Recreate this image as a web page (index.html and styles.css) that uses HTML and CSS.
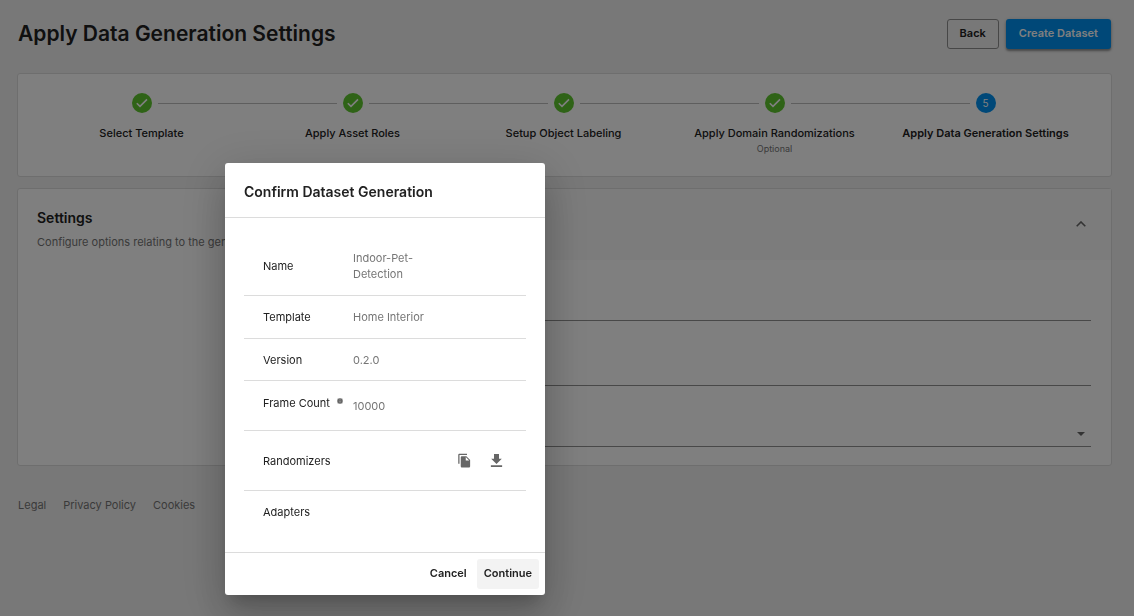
FILE: index.html
```html
<!DOCTYPE html>
<html lang="en">
<head>
<meta charset="utf-8">
<meta name="viewport" content="width=device-width, initial-scale=1">
<title>Apply Data Generation Settings</title>
<link rel="stylesheet" href="styles.css">
</head>
<body>
<div class="page">
  <header class="page-header">
    <h1 class="page-title">Apply Data Generation Settings</h1>
    <div class="page-actions">
      <button type="button" class="button button-outlined">Back</button>
      <button type="button" class="button button-primary">Create Dataset</button>
    </div>
  </header>

  <main class="content">
    <ol class="card stepper">
      <li class="step">
        <svg class="step-icon step-done" viewBox="0 0 20 20" aria-hidden="true"><circle cx="10" cy="10" r="10"/><path d="M4.8 10.2l3.2 3.2 7-7"/></svg>
        <span class="step-label">Select Template</span>
      </li>
      <li class="step">
        <svg class="step-icon step-done" viewBox="0 0 20 20" aria-hidden="true"><circle cx="10" cy="10" r="10"/><path d="M4.8 10.2l3.2 3.2 7-7"/></svg>
        <span class="step-label">Apply Asset Roles</span>
      </li>
      <li class="step">
        <svg class="step-icon step-done" viewBox="0 0 20 20" aria-hidden="true"><circle cx="10" cy="10" r="10"/><path d="M4.8 10.2l3.2 3.2 7-7"/></svg>
        <span class="step-label">Setup Object Labeling</span>
      </li>
      <li class="step">
        <svg class="step-icon step-done" viewBox="0 0 20 20" aria-hidden="true"><circle cx="10" cy="10" r="10"/><path d="M4.8 10.2l3.2 3.2 7-7"/></svg>
        <span class="step-label">Apply Domain Randomizations</span>
        <span class="step-note">Optional</span>
      </li>
      <li class="step" aria-current="step">
        <span class="step-icon step-number">5</span>
        <span class="step-label step-label-active">Apply Data Generation Settings</span>
      </li>
    </ol>

    <section class="card settings">
      <div class="settings-intro">
        <h2 class="settings-title">Settings</h2>
        <p class="settings-text">Configure options relating to the generation</p>
      </div>
      <div class="settings-panel">
        <button type="button" class="panel-toggle" aria-label="Collapse settings" aria-expanded="true">
          <svg class="chevron" viewBox="0 0 10 6" aria-hidden="true"><path d="M.7 5.3L5 1l4.3 4.3"/></svg>
        </button>
        <form class="fields">
          <input class="field" type="text" aria-label="Name">
          <input class="field" type="text" aria-label="Frame Count">
          <div class="select-wrap">
            <select class="field field-select" aria-label="Template"><option></option></select>
            <svg class="caret" viewBox="0 0 8 4" aria-hidden="true"><path d="M0 0h8L4 4z"/></svg>
          </div>
        </form>
      </div>
    </section>
  </main>

  <footer class="footer">
    <a href="#">Legal</a>
    <a href="#">Privacy Policy</a>
    <a href="#">Cookies</a>
  </footer>
</div>

<div class="backdrop">
  <div class="dialog" role="dialog" aria-modal="true" aria-labelledby="dialog-title">
    <h2 class="dialog-title" id="dialog-title">Confirm Dataset Generation</h2>
    <div class="dialog-body">
      <table class="summary">
        <tr><th scope="row">Name</th><td>Indoor-Pet-<br>Detection</td></tr>
        <tr><th scope="row">Template</th><td>Home Interior</td></tr>
        <tr class="row-compact"><th scope="row">Version</th><td>0.2.0</td></tr>
        <tr class="row-frames"><th scope="row">
          <span class="frames-label">Frame Count
            <svg class="info" viewBox="0 0 6 6" aria-hidden="true"><circle cx="3" cy="3" r="3"/><path d="M3 2.7v1.700M3 1.4v.6"/></svg>
          </span></th><td>10000</td></tr>
        <tr class="row-randomizers"><th scope="row">Randomizers</th><td>
          <div class="row-actions">
            <button type="button" class="icon-button" aria-label="Copy randomizers">
              <svg viewBox="0 0 24 24" aria-hidden="true"><path d="M16 1H4c-1.100 0-2 .9-2 2v14h2V3h12V1zm-1 4l6 6v10c0 1.100-.9 2-2 2H7.990C6.890 23 6 22.100 6 21l.010-14c0-1.100.890-2 1.990-2h7zm-1 7h5.500L14 6.500V12z"/></svg>
            </button>
            <button type="button" class="icon-button" aria-label="Download randomizers">
              <svg viewBox="0 0 24 24" aria-hidden="true"><path d="M20.500 9h-4.500V1.500H8V9H3.500l8.500 8.500L20.500 9zM3 19.500V22.500h18v-3H3z"/></svg>
            </button>
          </div></td></tr>
        <tr class="row-compact"><th scope="row">Adapters</th><td></td></tr>
      </table>
    </div>
    <div class="dialog-actions">
      <button type="button" class="text-button">Cancel</button>
      <button type="button" class="text-button text-button-focused">Continue</button>
    </div>
  </div>
</div>
</body>
</html>
```
FILE: styles.css
```css
* {
  box-sizing: border-box;
}

body {
  margin: 0;
  background: #f1f1f1;
  color: #212121;
  font: 11px/16px Inter, "Liberation Sans", sans-serif;
}

h1, h2, p, ol {
  margin: 0;
  padding: 0;
}

button, input, select {
  font: inherit;
  color: inherit;
}

.page {
  min-height: 100vh;
  padding: 18px 22px 18px 17px;
}

.page-header {
  display: flex;
  justify-content: space-between;
  align-items: center;
  height: 31px;
  padding: 0 1px;
}

.page-title {
  font-size: 21px;
  line-height: 30px;
  font-weight: 600;
}

.page-actions {
  display: flex;
  gap: 7px;
}

.button {
  height: 30px;
  padding: 0 13px 2px;
  border: 0;
  border-radius: 3px;
  font-weight: 600;
}

.button-outlined {
  padding: 0 12px 2px;
  background: transparent;
  border: 1px solid #8f8f8f;
}

.button-primary {
  background: #0090f0;
  color: #fff;
  box-shadow: 0 2px 2px rgba(0, 0, 0, 0.3), 0 1px 4px rgba(0, 0, 0, 0.2);
}

.content {
  display: grid;
  gap: 11px;
  margin-top: 24px;
}

.card {
  background: #fff;
  border: 1px solid #dcdcdc;
  border-radius: 3px;
}

.stepper {
  display: grid;
  grid-template-columns: repeat(5, 1fr);
  min-height: 104px;
  padding: 19px 20px 19px 18px;
  list-style: none;
}

.step {
  position: relative;
  display: flex;
  flex-direction: column;
  align-items: center;
  white-space: nowrap;
}

.step + .step::before {
  content: "";
  position: absolute;
  top: 10px;
  left: calc(-50% + 16px);
  right: calc(50% + 16px);
  border-top: 1px solid #bdbdbd;
}

.step-icon {
  width: 20px;
  height: 20px;
  margin-bottom: 12px;
}

.step-done circle {
  fill: #5fc72f;
}

.step-done path {
  fill: none;
  stroke: #fff;
  stroke-width: 1.600;
}

.step-number {
  border-radius: 50%;
  background: #0090f0;
  color: #fff;
  font-size: 10px;
  line-height: 20px;
  text-align: center;
}

.step-label {
  font-weight: 500;
}

.step-label-active {
  font-weight: 600;
}

.step-note {
  color: #757575;
  font-size: 9px;
}

.settings {
  display: grid;
  grid-template-columns: 1fr 2fr;
  min-height: 278px;
}

.settings-intro {
  padding: 19px;
}

.settings-title {
  font-size: 14px;
  line-height: 20px;
  font-weight: 600;
}

.settings-text {
  margin-top: 6px;
  color: #757575;
}

.panel-toggle {
  display: flex;
  align-items: center;
  justify-content: flex-end;
  width: 100%;
  height: 71px;
  padding: 0 25px 2px;
  border: 0;
  background: #f9f9f9;
}

.chevron {
  width: 10px;
  height: 6px;
  fill: none;
  stroke: #666;
  stroke-width: 1.600;
}

.fields {
  display: grid;
  gap: 35px;
  padding: 31px 20px 18px;
}

.field {
  width: 100%;
  height: 30px;
  border: 0;
  border-bottom: 1px solid #909090;
  border-radius: 0;
  background: transparent;
}

.select-wrap {
  display: grid;
  align-items: center;
  margin-top: -4px;
}

.field-select,
.caret {
  grid-area: 1 / 1;
}

.field-select {
  appearance: none;
}

.caret {
  justify-self: end;
  width: 8px;
  height: 4px;
  margin: 4px 6px 0 0;
  fill: #666;
}

.footer {
  display: flex;
  gap: 17px;
  margin-top: 31px;
  padding: 0 1px;
}

.footer a {
  color: #757575;
  text-decoration: none;
}

.backdrop {
  position: fixed;
  inset: 0;
  display: flex;
  align-items: flex-start;
  padding: 163px 20px 20px 225px;
  background: rgba(0, 0, 0, 0.5);
}

.dialog {
  width: 320px;
  border-radius: 3px;
  background: #fff;
  box-shadow: 0 11px 15px -7px rgba(0, 0, 0, 0.2),
    0 24px 38px 3px rgba(0, 0, 0, 0.14),
    0 9px 46px 8px rgba(0, 0, 0, 0.12);
}

.dialog-title {
  padding: 19px 19px 15px;
  border-bottom: 1px solid #dcdcdc;
  font-size: 14px;
  line-height: 20px;
  font-weight: 600;
}

.dialog-body {
  padding: 19px;
}

.summary {
  width: 100%;
  border-collapse: collapse;
}

.summary th,
.summary td {
  height: 43px;
  padding: 13px 0;
  border-bottom: 1px solid #dcdcdc;
  text-align: left;
}

.summary th {
  width: 109px;
  padding-left: 19px;
  font-weight: 400;
}

.summary td {
  color: #757575;
}

.summary .row-compact th,
.summary .row-compact td {
  height: 42px;
  padding-bottom: 12px;
}

.summary .row-frames th {
  padding: 14px 0 19px 19px;
}

.summary .row-frames td {
  padding: 17px 0 16px;
}

.summary .row-randomizers td {
  padding: 13px 0 14px;
}

.summary tr:last-child th,
.summary tr:last-child td {
  border-bottom: 0;
}

.frames-label {
  display: flex;
  align-items: flex-start;
  gap: 7px;
}

.info {
  width: 6px;
  height: 6px;
  margin-top: 3px;
  fill: #666;
  stroke: #ccc;
  stroke-width: 0.600;
}

.row-actions {
  display: flex;
  justify-content: flex-end;
  gap: 2px;
  padding-right: 15px;
}

.icon-button {
  display: grid;
  place-items: center;
  width: 30px;
  height: 32px;
  padding: 0;
  border: 0;
  background: transparent;
}

.icon-button svg {
  width: 15px;
  height: 15px;
  fill: #666;
}

.dialog-actions {
  display: flex;
  justify-content: flex-end;
  gap: 3px;
  padding: 6px;
  border-top: 1px solid #dcdcdc;
}

.text-button {
  height: 30px;
  padding: 0 7px 2px;
  border: 0;
  border-radius: 3px;
  background: transparent;
  font-weight: 600;
}

.text-button-focused {
  background: #f3f3f3;
}
```
